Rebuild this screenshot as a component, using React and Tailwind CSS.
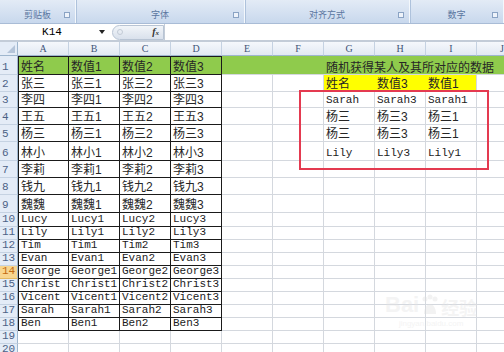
import React from 'react'

const COLS = ['A', 'B', 'C', 'D', 'E', 'F', 'G', 'H', 'I', 'J']
const HEIGHTS = [19, 17, 16, 17, 17, 19, 17, 17, 18, 14, 13, 13, 13, 13, 13, 13, 13, 13, 13, 13]
const NAMES = ['杨三', '林小', '李莉', '钱九', '魏魏', 'Lucy', 'Lily', 'Tim', 'Evan', 'George', 'Christ', 'Vicent', 'Sarah', 'Ben']
const PEOPLE = ['张三', '李四', '王五', ...NAMES]

// G..I block (rows 2-6)
const PICK = {
  2: ['姓名', '数值3', '数值1'],
  3: ['Sarah', 'Sarah3', 'Sarah1'],
  4: ['杨三', '杨三3', '杨三1'],
  5: ['杨三', '杨三3', '杨三1'],
  6: ['Lily', 'Lily3', 'Lily1'],
}

const GREEN = 'bg-[#8fcb4c]'

function cellText(row, col) {
  if (row === 1 && col < 4) return ['姓名', '数值1', '数值2', '数值3'][col]
  if (row >= 2 && row <= 18 && col < 4) {
    const p = PEOPLE[row - 2]
    return col === 0 ? p : p + col
  }
  if (PICK[row] && col >= 6 && col <= 8) return PICK[row][col - 6]
  return ''
}

function Text({ value }) {
  if (!value) return null
  const ascii = /^[\x00-\x7f]+$/.test(value)
  return ascii ? (
    <span className="font-['Liberation_Mono',monospace] text-[11px] leading-none text-[#1c1c1c]">{value}</span>
  ) : (
    <span className="font-['Liberation_Sans','Noto_Sans_CJK_SC',sans-serif] text-[12px] leading-none text-[#262626]">{value}</span>
  )
}

function Cell({ row, col }) {
  const inTable = row <= 18 && col < 4
  const text = cellText(row, col)
  let cls = 'flex items-end px-[2px] pb-[1px] overflow-hidden whitespace-nowrap '
  if (inTable) {
    cls += 'border-r border-b border-[#1a1a1a] '
    if (col === 0) cls += 'border-l '
    if (row === 1) cls += 'border-t '
    if (row === 1) cls += GREEN + ' '
  } else if (row === 1) {
    cls += GREEN + ' border-b border-b-[#d4d8de] '
  } else if (row === 2 && col >= 6 && col <= 8) {
    cls += 'bg-[#ffff00] border-b border-b-[#d4d8de] ' + (col === 8 ? 'border-r border-r-[#d4d8de] ' : '')
  } else {
    cls += 'border-r border-b border-[#d4d8de] '
  }
  return (
    <div className={cls}>
      <Text value={text} />
    </div>
  )
}

function Ribbon() {
  const groups = [
    { label: '剪贴板', w: 'w-[76px]' },
    { label: '字体', w: 'w-[169px]' },
    { label: '对齐方式', w: 'w-[165px]' },
    { label: '数字', w: 'flex-1' },
  ]
  return (
    <div className="h-[24px] flex bg-gradient-to-b from-[#e3ebf6] to-[#c8d8ed] border-b border-[#a9bcd6]">
      {groups.map((g) => (
        <div key={g.label} className={`${g.w} relative flex items-end justify-center pb-[4px] border-r border-[#f4f8fc] shadow-[1px_0_0_#aec2dc]`}>
          <span className="font-['Noto_Sans_CJK_SC',sans-serif] text-[9px] leading-none text-[#5a76a0]">{g.label}</span>
          <span className="absolute right-[5px] bottom-[5px] w-[6px] h-[6px] border border-[#8aa3c4] bg-[#eef3fa]" />
        </div>
      ))}
    </div>
  )
}

function FormulaBar() {
  return (
    <div className="h-[18px] flex items-center bg-white border-b-2 border-[#c3ccd8]">
      <div className="w-[96px] flex justify-center">
        <span className="font-['Liberation_Mono',monospace] text-[11px] text-black pl-[8px]">K14</span>
      </div>
      <svg width="8" height="6" viewBox="0 0 8 6" className="mx-[2px]">
        <path d="M1 1h6L4 5z" fill="#222" />
      </svg>
      <div className="ml-[4px] w-[52px] h-[15px] rounded-l-full bg-gradient-to-b from-[#f2f5f9] to-[#d9e1ec] border border-[#b8c4d4] flex items-center justify-between px-[4px]">
        <span className="w-[6px] h-[6px] rounded-full border border-[#c3cbd6]" />
        <span className="font-['Liberation_Serif',serif] italic font-bold text-[10px] text-[#333] leading-none">
          f<span className="text-[7px]">x</span>
        </span>
      </div>
      <div className="flex-1 h-full border-l border-[#c3ccd8]" />
    </div>
  )
}

export default function App() {
  return (
    <div className="w-[504px] h-[352px] overflow-hidden bg-white">
      <Ribbon />
      <FormulaBar />
      <div className="relative">
        {/* column headers */}
        <div className="grid grid-cols-[18px_repeat(10,51px)] h-[14px]">
          <div className="relative bg-[#e4ecf7] border-r border-b border-[#9eb6ce]">
            <svg width="8" height="8" viewBox="0 0 8 8" className="absolute right-[2px] bottom-[2px]">
              <path d="M8 0v8H0z" fill="#b4c4d9" />
            </svg>
          </div>
          {COLS.map((c) => (
            <div key={c} className="flex items-center justify-center bg-gradient-to-b from-[#f5f8fc] to-[#e2e9f3] border-r border-b border-r-[#c5d2e2] border-b-[#9eb6ce]">
              <span className="font-['Liberation_Serif',serif] text-[10px] leading-none text-[#3f5478]">{c}</span>
            </div>
          ))}
        </div>

        {HEIGHTS.map((h, i) => {
          const row = i + 1
          const sel = row === 14
          return (
            <div key={row} className="grid grid-cols-[18px_repeat(10,51px)]" style={{ height: h }}>
              <div
                className={`flex items-end pl-[2px] pb-[1px] border-b border-r ${
                  sel ? 'bg-[#f8d68f] border-b-[#e3b860] border-r-[#9eb6ce]' : 'bg-[#e4ecf7] border-b-[#c5d2e2] border-r-[#9eb6ce]'
                }`}
              >
                <span className={`font-['Liberation_Mono',monospace] text-[11px] leading-none ${sel ? 'text-[#c26a12]' : 'text-[#4c6286]'}`}>
                  {row}
                </span>
              </div>
              {COLS.map((c, ci) =>
                row === 1 && ci === 6 ? (
                  <div key={c} className={`relative z-10 flex items-end px-[2px] pb-[1px] whitespace-nowrap ${GREEN} border-b border-b-[#d4d8de]`}>
                    <span className="font-['Noto_Sans_CJK_SC',sans-serif] text-[12px] leading-none text-[#262626]">随机获得某人及其所对应的数据</span>
                  </div>
                ) : (
                  <Cell key={c} row={row} col={ci} />
                )
              )}
            </div>
          )
        })}

        {/* highlight box */}
        <div className="absolute left-[299px] top-[48px] w-[190px] h-[80px] border-2 border-[#e43a50] z-20" />

        {/* watermark */}
        <div className="absolute left-[385px] top-[252px] z-20 flex flex-col items-center opacity-40">
          <div className="flex items-end">
            <span className="font-['Liberation_Sans',sans-serif] font-bold text-[22px] leading-none text-[#e4e4e4]">Bai</span>
            <svg width="20" height="22" viewBox="0 0 20 22" className="mx-[1px]">
              <circle cx="5" cy="5" r="2.5" fill="#e0e0e0" />
              <circle cx="10" cy="3" r="2.5" fill="#e0e0e0" />
              <circle cx="15" cy="5" r="2.5" fill="#e0e0e0" />
              <path d="M4 20c0-6 3-10 6-10s6 4 6 10z" fill="#e0e0e0" />
            </svg>
            <span className="font-['Noto_Sans_CJK_SC',sans-serif] font-bold text-[18px] leading-none text-[#e4e4e4]">经验</span>
          </div>
          <span className="font-['Liberation_Sans',sans-serif] text-[8px] text-[#e4e4e4] mt-[2px]">jingyan.baidu.com</span>
        </div>
      </div>
    </div>
  )
}
